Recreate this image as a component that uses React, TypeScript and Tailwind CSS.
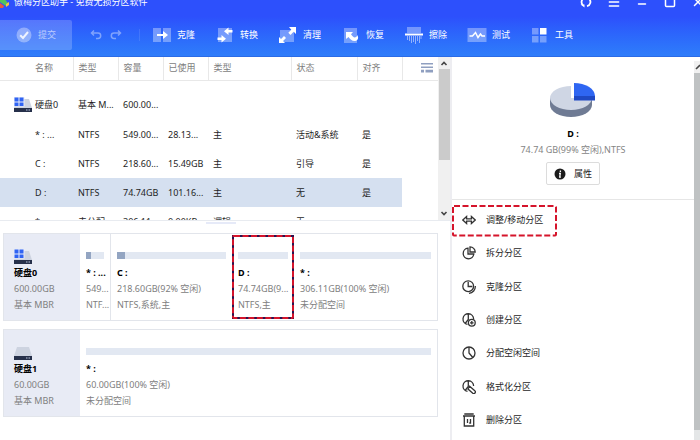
import type { ReactNode } from 'react'
import { Menu, Minus, Square, X } from 'lucide-react'

type PartitionRow = { name: string; type: string; size: string; used: string; kind: string; status: string; align: string; disk?: boolean; selected?: boolean }

const rows: PartitionRow[] = [
  { name: '硬盘0', type: '基本 M...', size: '600.00...', used: '', kind: '', status: '', align: '', disk: true },
  { name: '* : ...', type: 'NTFS', size: '549.00...', used: '28.13...', kind: '主', status: '活动&系统', align: '是' },
  { name: 'C :', type: 'NTFS', size: '218.60...', used: '15.49GB', kind: '主', status: '引导', align: '是' },
  { name: 'D :', type: 'NTFS', size: '74.74GB', used: '101.16...', kind: '主', status: '无', align: '是', selected: true },
  { name: '* :', type: '未分配', size: '306.11...', used: '0.00KB', kind: '逻辑', status: '无', align: '' },
]

const columns = ['类型', '容量', '已使用', '类型', '状态', '对齐']

export default function App() {
  return (
    <div className="flex h-screen flex-col overflow-hidden bg-white font-['Noto_Sans','Noto_Sans_CJK_SC',sans-serif] text-[9px] leading-4 text-[#1e1e1e]">
      <Header />
      <div className="flex min-h-0 flex-1">
        <main className="flex min-w-0 flex-1 flex-col border-r-2 border-[#ededf1]">
          <PartitionTable />
          <DiskMap />
        </main>
        <Sidebar />
      </div>
    </div>
  )
}

function Header() {
  return (
    <header className="overflow-hidden border-b border-[#2b6be6] bg-linear-to-b from-[#2d50fc] from-30% to-[#2f7dfa] text-white">
      <div className="-mt-2 flex h-5 items-center">
        <AppLogo />
        <h1 className="ml-1 flex-1">傲梅分区助手 - 免费无损分区软件</h1>
        <div className="-mr-3 flex">
          <WindowButton label="刷新">
            <svg viewBox="0 0 12 12" className="size-3" fill="none" stroke="currentColor" strokeWidth="1.8">
              <path d="M5 1.8A4.300 4.300 0 0 0 3 9.200M7 10.200A4.300 4.300 0 0 0 9 2.800" />
              <path d="M0.500 8.500h4v3zM11.500 3.500h-4v-3z" fill="currentColor" stroke="none" />
            </svg>
          </WindowButton>
          <WindowButton label="菜单"><Menu className="size-3.5" strokeWidth={2.5} /></WindowButton>
          <WindowButton label="最小化"><Minus className="mt-1 size-3" strokeWidth={3} /></WindowButton>
          <WindowButton label="最大化"><Square className="size-3" strokeWidth={3} /></WindowButton>
          <WindowButton label="关闭"><X className="size-3.5" strokeWidth={2.5} /></WindowButton>
        </div>
      </div>
      <div className="flex items-center pt-2 pb-1.5">
        <button type="button" className="flex h-[30px] w-[72px] items-center gap-1.5 rounded-r-xs bg-white/20 pl-4 text-white/60">
          <svg viewBox="0 0 16 16" className="size-4">
            <circle cx="8" cy="8" r="7.5" fill="#fff" opacity="0.35" />
            <path d="M4.2 8.2 7 11l5-6" fill="none" stroke="#fff" strokeWidth="2" opacity="0.85" />
          </svg>
          提交
        </button>
        <div className="flex w-[68px] items-center gap-2 border-r border-white/10 pl-[18px] text-white/40">
          <button type="button" aria-label="撤销">
            <svg viewBox="0 0 12 12" className="size-3" fill="none" stroke="currentColor" strokeWidth="1.5">
              <path d="M4 1.5 1.5 4 4 6.5M1.5 4H8a2.6 2.6 0 0 1 0 5.4H6" />
            </svg>
          </button>
          <button type="button" aria-label="重做">
            <svg viewBox="0 0 12 12" className="size-3" fill="none" stroke="currentColor" strokeWidth="1.5">
              <path d="M8 1.5 10.5 4 8 6.5M10.5 4H4a2.6 2.6 0 0 0 0 5.4h2" />
            </svg>
          </button>
        </div>
        <nav className="ml-3 flex gap-5">
          <Tool label="克隆">
            <path d="M1 2h8v14H1zM11 2h8v14h-8z" opacity="0.35" />
            <path d="M5 8h6V5l5 4-5 4v-3H5z" />
          </Tool>
          <Tool label="转换">
            <path d="M3 2h14v14H3z" opacity="0.35" />
            <path d="M17.5 4h-4V1.500L9 5.200 13.500 9V6.500h4zM2.500 11.500h4V9L11 12.800 6.500 16.500V14h-4z" />
          </Tool>
          <Tool label="清理">
            <path d="M2 4h14v12H2z" opacity="0.35" />
            <path d="M11 1h7v7l-2.300-2.300-3.200 3.200-2.200-2.200 3-3zM1 17v-6l2 2 3-3 2 2-3 3 2 2z" />
          </Tool>
          <Tool label="恢复">
            <path d="M3 2h13v15H3z" opacity="0.35" />
            <path d="M5 6h7l-2 2.300c1.500 2.200 3 3.500 4.500 3 1.200-.4 1.600-1.300 1.600-2.300 2 2.300 1 5.800-2 6-3 .2-5-1.700-6.600-4L5 13z" />
          </Tool>
          <Tool label="擦除">
            <path d="M3 1h14v6H3z" opacity="0.35" />
            <path d="M1 7.500h18v2H1z" />
            <path d="M3.500 10v4M5.500 10v5M7.500 10v7M9.500 10v6M11.500 10v8M13.500 10v5M15.500 10v7M17 10v3" stroke="currentColor" strokeWidth="0.8" opacity="0.6" />
          </Tool>
          <Tool label="测试">
            <path d="M0.5 2h19v14h-19z" opacity="0.35" />
            <path d="M2.500 10h3l3-3.500 2.500 5 2.500-3.500 1.500 2h3" fill="none" stroke="currentColor" strokeWidth="1.500" />
          </Tool>
          <Tool label="工具">
            <path d="M2 2h6.500v6.500H2zM2 10h6.500v6.500H2zM10 10h6.500v6.500H10z" opacity="0.35" />
            <path d="M10 2h6.500v6.500H10z" />
          </Tool>
        </nav>
      </div>
    </header>
  )
}

function AppLogo() {
  return (
    <svg viewBox="0 0 10 12" className="h-3 w-2.5">
      <path d="M0 2h4l4 5-2 3-6-4z" fill="#53c35b" />
      <path d="M0 7l4 3-1 2H0z" fill="#e9573f" />
      <path d="M6 8l3-2v3l-3 2z" fill="#f6c444" />
    </svg>
  )
}

function WindowButton({ label, children }: { label: string; children: ReactNode }) {
  return (
    <button type="button" aria-label={label} className="flex h-5 w-7 items-center justify-center">
      {children}
    </button>
  )
}

function Tool({ label, children }: { label: string; children: ReactNode }) {
  return (
    <button type="button" className="flex items-center gap-[5px]">
      <svg viewBox="0 0 20 18" className="h-[18px] w-5" fill="currentColor">{children}</svg>
      {label}
    </button>
  )
}

function PartitionTable() {
  return (
    <section className="flex min-h-0 flex-1 border-b border-[#e8ebf0]">
      <div className="min-w-0 flex-1 overflow-hidden">
        <table className="w-full table-fixed text-left whitespace-nowrap">
          <colgroup>
            <col className="w-[73px]" />
            <col className="w-[45px]" />
            <col className="w-[45px]" />
            <col className="w-[45px]" />
            <col className="w-[83px]" />
            <col className="w-[66px]" />
            <col className="w-[45px]" />
            <col />
          </colgroup>
          <thead className="text-[#7d7d7d]">
            <tr className="h-[23px] border-b border-[#e8e8e8]">
              <th className="border-r border-[#e8e8e8] pl-[35px] font-normal">名称</th>
              {columns.map((c, i) => (
                <th key={i} className="border-r border-[#e8e8e8] pl-[5px] font-normal">{c}</th>
              ))}
              <th className="pl-[18px]">
                <button type="button" aria-label="列设置" className="block">
                  <svg viewBox="0 0 12 10" className="h-2.5 w-3" fill="#8f9fc0">
                    <path d="M0 0h12v1.500H0zM0 3.500h12V5H0zM0 6.800h3V9.500H0zM4.500 6.800H12V9.500H4.500z" />
                  </svg>
                </button>
              </th>
            </tr>
          </thead>
          <tbody>
            {rows.map((r, i) => (
              <tr key={i} className={r.disk ? 'h-10' : 'h-[29px]'}>
                <Cell row={r} first>
                  <span className="flex items-center gap-1">
                    <span className="flex w-[17px] shrink-0">{r.disk && <DiskIcon system />}</span>
                    {r.name}
                  </span>
                </Cell>
                <Cell row={r}>{r.type}</Cell>
                <Cell row={r}>{r.size}</Cell>
                <Cell row={r}>{r.used}</Cell>
                <Cell row={r}>{r.kind}</Cell>
                <Cell row={r}>{r.status}</Cell>
                <Cell row={r}>{r.align}</Cell>
                <td />
              </tr>
            ))}
          </tbody>
        </table>
      </div>
      <div className="flex w-3 flex-col items-center bg-[#f0f0f0]">
        <Chevron up />
        <div className="w-[11px] flex-[91] bg-[#cbcbcb]" />
        <div className="flex-[48]" />
        <Chevron />
      </div>
    </section>
  )
}

function Cell({ row, first, children }: { row: PartitionRow; first?: boolean; children: ReactNode }) {
  return (
    <td className={`${first ? 'pl-3.5' : 'pl-[5px]'} ${row.disk ? 'pt-2.5' : ''} ${row.selected ? 'bg-[#d5e0f0]' : ''}`}>
      {children}
    </td>
  )
}

function Chevron({ up }: { up?: boolean }) {
  return (
    <svg viewBox="0 0 12 12" className="size-3 shrink-0" fill="none" stroke="#444" strokeWidth="1.6">
      <path d={up ? 'M3.500 8 6 5.500 8.500 8' : 'M3.500 4 6 6.500 8.500 4'} />
    </svg>
  )
}

function DiskIcon({ system }: { system?: boolean }) {
  return (
    <svg viewBox="0 0 18 16" className="h-4 w-[18px] shrink-0">
      <path d="M3 2h12l3 9H0z" fill="#cdd3e0" />
      <path d="M0 11h18v4H0z" fill="#26304a" />
      <path d="M12 12.5h1.500v1H12zM14.500 12.500H16v1h-1.500z" fill="#b9c3dc" />
      {system && (
        <>
          <path d="M0 0h10.500v9.500H0z" fill="#e9edf8" />
          <path d="M0.500 0.500h4v4h-4zM5.500 0.500h4v4h-4zM0.500 5.500h4v3.500h-4zM5.500 5.500h4v3.500h-4z" fill="#2f63f3" />
        </>
      )}
    </svg>
  )
}

function DiskMap() {
  return (
    <section className="flex flex-col pr-3 pb-[23px] pl-[3px]">
      {/* splitter grip */}
      <div className="flex h-3 justify-center pt-px">
        <div className="h-0.5 w-[30px] bg-[#e6eaf8]" />
      </div>
      <div className="flex flex-col gap-2">
        <DiskCard name="硬盘0" size="600.00GB" system>
          <div className="grid min-w-0 flex-1 grid-cols-[minmax(0,31fr)_minmax(0,121fr)_minmax(0,62fr)_minmax(0,143fr)]">
            <Partition name="* : ..." size="549..." info="NTF..." used={25} divider />
            <Partition name="C :" size="218.60GB(92% 空闲)" info="NTFS,系统,主" used={7} />
            <Partition name="D :" size="74.74GB(9..." info="NTFS,主" selected />
            <Partition name="* :" size="306.11GB(100% 空闲)" info="未分配空间" />
          </div>
        </DiskCard>
        <DiskCard name="硬盘1" size="60.00GB">
          <div className="min-w-0 flex-1">
            <Partition name="* :" size="60.00GB(100% 空闲)" info="未分配空间" />
          </div>
        </DiskCard>
      </div>
    </section>
  )
}

function DiskCard({ name, size, system, children }: { name: string; size: string; system?: boolean; children: ReactNode }) {
  return (
    <article className="flex border border-[#e2e5eb]">
      <div className="w-[76px] bg-[#e8ebf5] pt-[15px] pb-[7px] pl-2.5 text-[#808080]">
        <DiskIcon system={system} />
        <h2 className="font-bold text-black">{name}</h2>
        <p>{size}</p>
        <p>基本 MBR</p>
      </div>
      {children}
    </article>
  )
}

function Partition({ name, size, info, used, divider, selected }: { name: string; size: string; info: string; used?: number; divider?: boolean; selected?: boolean }) {
  return (
    <div className={`relative pt-[15px] pl-1.5 whitespace-nowrap text-[#808080] ${divider ? 'border-r border-[#e2e5eb]' : ''}`}>
      <div className="flex h-4 pt-[3px] pr-1.5">
        <div className="h-[7px] w-full bg-[#e2e8f2]">
          {used && <div className="h-full bg-[#93a5c2]" style={{ width: `${used}%` }} />}
        </div>
      </div>
      <h3 className="font-bold text-black">{name}</h3>
      <p>{size}</p>
      <p>{info}</p>
      {selected && (
        <div className="absolute inset-x-0 inset-y-px border-2 border-[#2a1450]">
          <DashedFrame />
        </div>
      )}
    </div>
  )
}

function DashedFrame() {
  return (
    <svg className="pointer-events-none absolute -inset-px h-[calc(100%+2px)] w-[calc(100%+2px)] overflow-visible">
      <rect width="100%" height="100%" rx="1" fill="none" stroke="#d5142b" strokeWidth="2" strokeDasharray="6 2.5" />
    </svg>
  )
}

function Sidebar() {
  return (
    <aside className="flex w-[248px] shrink-0">
      <div className="flex flex-1 flex-col">
        <div className="flex flex-col items-center border-b border-[#e6e6e6] pt-[25px] pb-3.5">
          <svg viewBox="0 0 46 36" className="h-9 w-[46px]">
            <path d="M0 16v7a21 12 0 0 0 42 0v-7z" fill="#6f7b94" />
            <path d="M21 16V4a21 12 0 1 0 21 12z" fill="#cfd6e4" />
            <path d="M24 14h21v4.500H24z" fill="#1f49c4" />
            <path d="M24 1a21 13 0 0 1 21 13H24z" fill="#2f66f2" />
          </svg>
          <h2 className="mt-2 font-bold text-black">D :</h2>
          <p className="text-[#858585]">74.74 GB(99% 空闲),NTFS</p>
          <button type="button" className="mt-1 flex h-[23px] items-center gap-2 rounded-xs border border-[#dcdcdc] px-[7px]">
            <svg viewBox="0 0 12 12" className="size-3">
              <circle cx="6" cy="6" r="5.5" fill="#1c1c1c" />
              <path d="M6.400 2.500v1.600M5 5.500h1.300L5.700 9.200h1.200" fill="none" stroke="#fff" strokeWidth="1.3" />
            </svg>
            属性
          </button>
        </div>
        <nav className="flex flex-1 flex-col pt-[3px] pb-[3px]">
          <Action label="调整/移动分区" highlight>
            <path d="M0.800 7l3.800-3.500V5.800h4.800V3.500L13.200 7 9.400 10.500V8.200H4.600v2.300z" />
          </Action>
          <Action label="拆分分区">
            <path d="M6 2.200A5.300 5.300 0 1 0 11.800 8H6z" />
            <path d="M8 0.800V6h5.200A5.300 5.300 0 0 0 8 0.800z" />
          </Action>
          <Action label="克隆分区">
            <circle cx="6.200" cy="6.200" r="5.400" />
            <path d="M6.200 2v4.500h4.200M13.300 6A6.800 6.800 0 0 1 7 13.300" />
          </Action>
          <Action label="创建分区">
            <path d="M5.500 11.300A5.300 5.300 0 1 1 11.600 6M6.300 1v5.500l-2.800 3.500" />
            <circle cx="9.800" cy="9.800" r="3.400" />
            <path d="M9.800 8v3.600M8 9.800h3.600" />
          </Action>
          <Action label="分配空闲空间">
            <circle cx="7" cy="7" r="6" />
            <path d="M7 1v6l3.800 4.500" />
          </Action>
          <Action label="格式化分区">
            <path d="M5.500 11.300A5.300 5.300 0 1 1 11.600 6M6.300 1v5.500l-2.800 3.500" />
            <path d="M7.600 6.200l5.200 4.600a1.200 1.200 0 0 1-2 2.400L6 9z" />
          </Action>
          <Action label="删除分区">
            <path d="M1 3h12M2.300 3v10h9.400V3M2.300 1h9.400M5.500 6v4M8.500 6v4H7.200" />
          </Action>
        </nav>
      </div>
      <div className="mt-1 flex w-1.5 flex-col overflow-hidden bg-[#e4e6e7]">
        <svg viewBox="0 0 6 12" className="h-3 w-1.5 bg-[#f0f0f0]" fill="none" stroke="#444" strokeWidth="1.6">
          <path d="M2 8l4-4" />
        </svg>
        <div className="mb-2.5 flex-1 bg-[#bfc2c3]" />
      </div>
    </aside>
  )
}

function Action({ label, highlight, children }: { label: string; highlight?: boolean; children: ReactNode }) {
  return (
    <button type="button" className="relative flex flex-1 items-center gap-2.5 pl-2.5 text-left">
      <svg viewBox="0 0 14 14" className="size-3.5" fill="none" stroke="#333" strokeWidth="1.3">{children}</svg>
      {label}
      {highlight && (
        <span className="absolute top-1 bottom-0.5 left-0.5 w-[101px]">
          <DashedFrame />
        </span>
      )}
    </button>
  )
}
